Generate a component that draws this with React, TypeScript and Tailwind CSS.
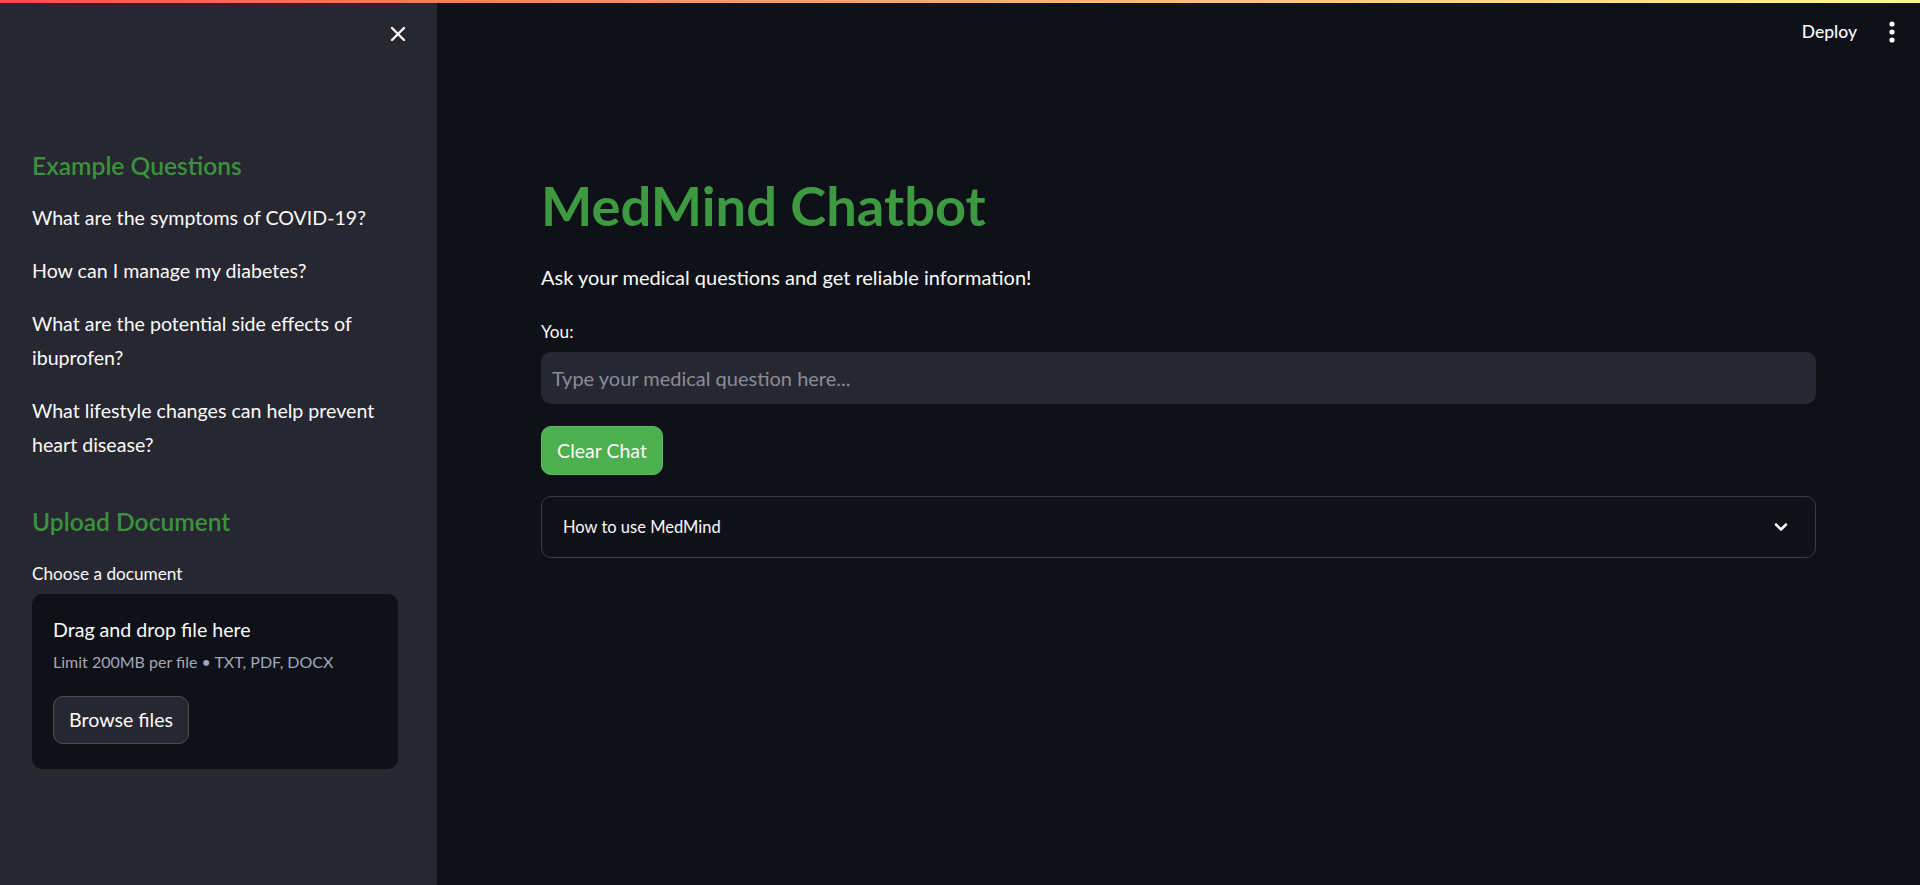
import React from "react";
import { ChevronDown, X } from "lucide-react";

const questions = [
  "What are the symptoms of COVID-19?",
  "How can I manage my diabetes?",
  "What are the potential side effects of ibuprofen?",
  "What lifestyle changes can help prevent heart disease?",
];

const Sidebar: React.FC = () => (
  <aside className="w-[437px] shrink-0 bg-[#262730] px-[32px] flex flex-col">
    <div className="h-[62px] flex items-center justify-end">
      <X size={24} strokeWidth={2.4} className="text-[#fafafa] mr-[-5px]" />
    </div>
    <h3 className="mt-[86px] text-[24.6px] leading-[30px] font-semibold text-[#3a923d]">
      Example Questions
    </h3>
    <div className="mt-[20px] w-[366px]">
      {questions.map((q) => (
        <p key={q} className="text-[19.6px] leading-[34px] text-[#fafafa] mb-[19px]">
          {q}
        </p>
      ))}
    </div>
    <h3 className="mt-[26px] text-[24.6px] leading-[30px] font-semibold text-[#3a923d]">
      Upload Document
    </h3>
    <label className="mt-[22px] text-[17.2px] leading-[29px] text-[#fafafa]">
      Choose a document
    </label>
    <div className="mt-[6px] w-[366px] rounded-[10px] bg-[#0e1117] px-[21px] pt-[22px] pb-[25px] flex flex-col items-start">
      <span className="text-[19.6px] leading-[28px] text-[#fafafa]">Drag and drop file here</span>
      <span className="mt-[5px] text-[16px] leading-[25px] text-[#a3a8b8]">
        Limit 200MB per file • TXT, PDF, DOCX
      </span>
      <button className="mt-[22px] h-[48px] w-[136px] rounded-[10px] border border-[#4b4d58] bg-[#262730] text-[19.6px] text-[#fafafa]">
        Browse files
      </button>
    </div>
  </aside>
);

const Header: React.FC = () => (
  <div className="h-[58px] flex items-center justify-end pr-[25px] gap-[32px]">
    <span className="text-[17.5px] font-medium text-[#fafafa]">Deploy</span>
    <svg width="6" height="22" viewBox="0 0 6 22" className="fill-[#fafafa]">
      <circle cx="3" cy="3" r="2.6" />
      <circle cx="3" cy="11" r="2.6" />
      <circle cx="3" cy="19" r="2.6" />
    </svg>
  </div>
);

export default function App() {
  return (
    <div className="h-[885px] w-[1920px] flex flex-col overflow-hidden bg-[#0e1117] font-['Source_Sans_Pro','Lato',sans-serif]">
      <div className="h-[3px] shrink-0 bg-gradient-to-r from-[#ff4b4b] to-[#fffd80]" />
      <div className="flex flex-1 min-h-0">
        <Sidebar />
        <main className="flex-1 flex flex-col">
          <Header />
          <div className="px-[104px] flex flex-col">
            <h1 className="mt-[110px] text-[54.3px] leading-[68px] font-bold text-[#3d9a40]">
              MedMind Chatbot
            </h1>
            <p className="mt-[22px] text-[20px] leading-[33px] text-[#fafafa]">
              Ask your medical questions and get reliable information!
            </p>
            <label className="mt-[23px] text-[17.2px] leading-[29px] text-[#fafafa]">You:</label>
            <div className="mt-[6px] h-[52px] rounded-[10px] bg-[#262730] flex items-center px-[11px]">
              <span className="text-[20px] text-[#8a8d98]">Type your medical question here...</span>
            </div>
            <div className="mt-[22px]">
              <button className="h-[49px] w-[122px] rounded-[10px] bg-[#4caf50] border border-[#5bbf5f] text-[19.5px] text-[#fafafa]">
                Clear Chat
              </button>
            </div>
            <div className="mt-[21px] h-[62px] rounded-[10px] border border-[#393b45] flex items-center justify-between pl-[21px] pr-[24px]">
              <span className="text-[16.5px] text-[#fafafa]">How to use MedMind</span>
              <ChevronDown size={20} strokeWidth={3} className="text-[#fafafa]" />
            </div>
          </div>
        </main>
      </div>
    </div>
  );
}
